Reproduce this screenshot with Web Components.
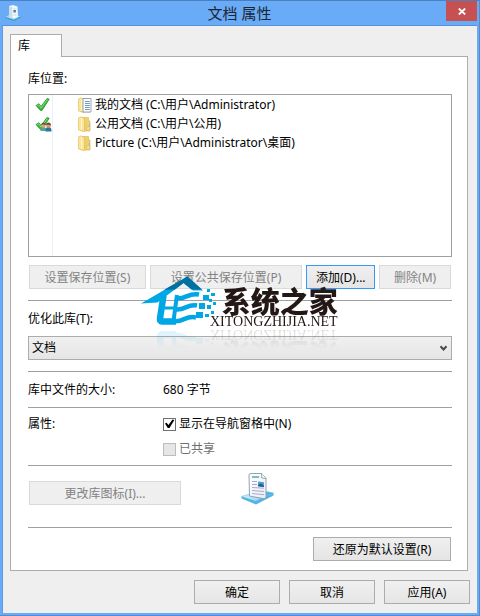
<!DOCTYPE html>
<html lang="zh-CN">
<head>
<meta charset="utf-8">
<title>文档 属性</title>
<style>
html, body { margin: 0; }
body { font: 12px/18px "Noto Sans", "Noto Sans CJK SC", sans-serif; color: #000; }
</style>
</head>
<body>
<library-dialog></library-dialog>

<script>
function define(name, html, setup) {
  const template = document.createElement('template');
  template.innerHTML = '<style>*{box-sizing:border-box}:host([hidden]){display:none}</style>' + html;
  customElements.define(name, class extends HTMLElement {
    connectedCallback() {
      if (this.shadowRoot) return;
      this.attachShadow({ mode: 'open' }).append(template.content.cloneNode(true));
      if (setup) setup(this, this.shadowRoot);
    }
  });
}

define('dialog-frame', `
<style>
:host { display: flex; flex-direction: column; box-sizing: border-box; min-height: 100vh; background: #6aabf7;
  border-top: 1px solid #4a80c0; border-right: 1px solid #4f8cd2; border-bottom: 1px solid #4f8cd2; }
.client { flex: 1; display: flex; flex-direction: column; margin: 0 2px 2px 2px; background: #efefef;
  border-top: 1px solid #5591d8; border-left: 1px solid #5e9ce6; padding: 8px 9px 9px 7px; }
</style>
<slot name="title"></slot>
<div class="client"><slot></slot></div>`);

define('title-bar', `
<style>
:host { display: grid; grid-template-columns: 31px 1fr 31px; height: 24px; padding: 0 2px; }
.icon { margin: 4px 0 0 3px; }
h1 { margin: 0; font-weight: 400; font-size: 15px; line-height: 24px; text-align: center; color: #1b2733; }
button { height: 20px; border: 0; padding: 0; background: #c75050; display: grid; place-items: center; }
svg { display: block; }
</style>
<svg class="icon" width="16" height="16" viewBox="0 0 16 16">
  <path d="M0 12l5-2.500 11 1.700-7 4.600z" fill="#8fd6f2"/>
  <path d="M0 12l9 2.800 7-3.600v1L9 16 0 13z" fill="#3c93c8"/>
  <path d="M4 1l4-1 4.500 1.500.5 10.500-4.500 1.500L4 12z" fill="#f3f8fa"/>
  <path d="M4 1l3.500 1.500v10.800L4 12z" fill="#cfdde5"/>
  <path d="M8.500 4h2.800M8.500 10h3" stroke="#c3d2da" stroke-width=".8"/>
  <path d="M8.500 5h2.300v2.500H8.500z" fill="#49768f"/>
</svg>
<h1><slot></slot></h1>
<button type="button" aria-label="关闭"><svg width="8" height="7" viewBox="0 0 8 7"><path d="M.8.500L7.200 6.500M7.200.500L.8 6.500" stroke="#fff" stroke-width="1.800"/></svg></button>`);

define('tab-panel', `
<style>
:host { display: flex; flex-direction: column; flex: 1; }
.tabs { display: flex; }
.tab { width: 52px; height: 23px; padding: 0 7px; margin-bottom: -1px; position: relative;
  border: 1px solid #acacac; border-bottom: 0; background: #fff; font: inherit; line-height: 20px; text-align: left; color: inherit; }
.page { flex: 1; display: flex; flex-direction: column; background: #fff; border: 1px solid #acacac; padding: 13px 15px 9px 17px; }
</style>
<div class="tabs" role="tablist"><button class="tab" role="tab" aria-selected="true" type="button"></button></div>
<div class="page" role="tabpanel"><slot></slot></div>`, (host, root) => {
  root.querySelector('.tab').textContent = host.getAttribute('label');
});

define('push-button', `
<style>
:host { display: block; }
button { display: block; width: 100%; height: 24px; padding: 1px 0 0; font: inherit; line-height: 21px; color: #000; white-space: nowrap;
  border: 1px solid #acacac; background: linear-gradient(#f0f0f0, #e5e5e5); }
:host([default]) button { border-color: #3399ff; }
button:disabled { color: #838383; border-color: #d9d9d9; background: #efefef; }
</style>
<button type="button"><slot></slot></button>`, (host, root) => {
  root.querySelector('button').disabled = host.hasAttribute('disabled');
});

define('rule-line', `
<style>:host { display: block; } hr { margin: 0; border: 0; height: 1px; background: #a0a0a0; }</style><hr>`);

define('location-list', `
<style>
:host { flex: 1; display: flex; border: 1px solid #a0a0a0; }
.list { flex: 1; padding-top: 1px; background: linear-gradient(90deg, #fff 23px, #e6f0fb 23px, #e6f0fb 24px, #fff 24px); }
</style>
<div class="list" role="list"><slot></slot></div>`);

define('location-item', `
<style>
:host { display: grid; grid-template-columns: 48px 18px 1fr; height: 19px; line-height: 18px; }
.marks { padding: 0 0 0 6px; }
.folder { margin-top: 1px; }
svg { display: block; }
</style>
<span class="marks"><svg width="18" height="17" viewBox="0 0 18 17">
  <g class="tick"><path d="M1 9.500l3-1.800 2 2.800L12 2.500l2.200.7L7 14.500H5.500z" fill="#35b83a" stroke="#168c22" stroke-width=".7"/><path d="M2.300 9.500l1.500-.7 2.200 3.300 6.500-8.600" fill="none" stroke="#8ce478" stroke-width=".9"/></g>
  <g class="people"><path d="M5.500 16c0-3 1-4 3-4s3 1 3 4z" fill="#4fa79b"/><path d="M10.500 16.500c0-3.500 1-4.500 3-4.500s3 1 3 4.500z" fill="#32739c"/><circle cx="8.500" cy="10.500" r="2.200" fill="#dca374"/><circle cx="13.500" cy="10.600" r="2.300" fill="#d69769"/><path d="M6.200 10c0-3 4.600-3 4.700 0L8 9.200zM11 10c0-3.300 5-3.300 5 .3L13 9.500z" fill="#6b4532"/></g>
</svg></span>
<svg class="folder" width="16" height="16" viewBox="0 0 16 16">
  <path d="M4 1.500h7.500v3.500h1.500v10H4z" fill="#f0cf6c" stroke="#dcb650" stroke-width=".6"/>
  <path d="M1.500 2L4 .8l3.500 1.700v13L1.500 14z" fill="#fae59b" stroke="#dcb850" stroke-width=".6"/>
  <path d="M4.500 2v12" stroke="#fff4c8"/>
  <path class="back" d="M9.500 10.500h3.300v4.200H9.500z" fill="#f7de8f" stroke="#dcb650" stroke-width=".6"/>
  <path class="back" d="M12.500 8v2.500" stroke="#7cc1e8"/>
  <g class="paper"><path d="M6 1.500h8v13.500H6z" fill="#f9fbfd" stroke="#8192a5" stroke-width=".8"/><path d="M8 4.500h4.800M8 6.500h4.800M8 8.500h4.800M8 10.500h4.800M8 12.500h4.800" stroke="#527fb1" stroke-width=".8"/></g>
</svg>
<span><slot></slot></span>`, (host, root) => {
  host.setAttribute('role', 'listitem');
  const has = n => host.hasAttribute(n);
  if (!has('current') && !has('shared')) root.querySelector('.tick').remove();
  if (!has('shared')) root.querySelector('.people').remove();
  if (!has('documents')) root.querySelector('.paper').remove();
});

define('check-box', `
<style>
:host { display: block; }
label { display: flex; align-items: center; gap: 3px; height: 18px; }
input { appearance: none; width: 13px; height: 13px; margin: 0; border: 1px solid #707070; background: #fff; display: grid; place-items: center; }
input:checked::before { content: ""; width: 11px; height: 11px; background: #000; clip-path: polygon(9% 45%, 23% 38%, 41% 58%, 77% 9%, 94% 14%, 50% 86%, 34% 86%); }
:host([disabled]) { color: #707070; }
input:disabled { border-color: #bcbcbc; background: #e6e6e6; }
</style>
<label><input type="checkbox"><span><slot></slot></span></label>`, (host, root) => {
  const input = root.querySelector('input');
  input.checked = host.hasAttribute('checked');
  input.disabled = host.hasAttribute('disabled');
});

define('select-field', `
<style>
:host { display: block; }
label { display: block; margin-bottom: 8px; }
.box { display: grid; align-items: center; }
select, svg { grid-area: 1 / 1; }
select { appearance: none; width: 100%; height: 24px; margin: 0; border: 1px solid #acacac; border-radius: 0; padding: 0 3px;
  font: inherit; line-height: 22px; color: #000; background: linear-gradient(#f0f0f0, #e5e5e5); }
svg { justify-self: end; margin-right: 5px; pointer-events: none; }
</style>
<label for="kind"></label>
<div class="box"><select id="kind"></select>
<svg width="7" height="7" viewBox="0 0 7 7"><path d="M.500 1.200l3 3.300 3-3.300" fill="none" stroke="#484848" stroke-width="2"/></svg></div>`, (host, root) => {
  root.querySelector('label').textContent = host.getAttribute('label');
  root.querySelector('select').append(new Option(host.getAttribute('value')));
});

define('property-row', `
<style>
:host { display: grid; grid-template-columns: 135px 1fr; }
.value { display: grid; gap: 7px; }
</style>
<span class="name"></span><div class="value"><slot></slot></div>`, (host, root) => {
  root.querySelector('.name').textContent = host.getAttribute('label');
});

define('library-icon', `
<style>:host { display: block; } svg { display: block; }</style>
<svg width="34" height="34" viewBox="0 0 34 34" role="img" aria-label="文档库">
  <defs><linearGradient id="base" x2="1"><stop stop-color="#d9f3fc"/><stop offset=".5" stop-color="#9bdcf6"/><stop offset="1" stop-color="#2d9bd9"/></linearGradient>
  <linearGradient id="sheet" x2="1" y2="1"><stop stop-color="#fff"/><stop offset="1" stop-color="#e8eef5"/></linearGradient></defs>
  <path d="M1.500 25.500l20-6L33.500 22 16 30.500z" fill="url(#base)" stroke="#7ec7e6" stroke-width=".7"/>
  <path d="M1.500 25.500l14 4.500 18-8v2.500L16 33.500 1.500 27.500z" fill="#54b5e4"/>
  <path d="M9.500 25L9 4q0-1.500 2-1.500h10.500L26 7v19q-.2 2-2 1.700z" fill="url(#sheet)" stroke="#8d99a4" stroke-width=".9"/>
  <path d="M21.500 2.500l.3 4.500 4.200.500" fill="#fff" stroke="#8d99a4" stroke-width=".9"/>
  <path d="M12 6h7" stroke="#54a6b8" stroke-width="1.500"/>
  <path d="M12 10.500h5M12 13.500h5M12 16.500l12 .7M12 19.500l12 1M12 22.500l12 1.200" stroke="#aba8cf" stroke-width="1"/>
  <path d="M18 10.500l6 .7v4.800l-6-.7z" fill="#45a1d8"/><path d="M18 14l3-1.500 3 2.500v1l-6-.7z" fill="#245e82"/>
</svg>`);

define('site-watermark', `
<style>
:host { position: absolute; left: 141px; top: 275px; display: flex; pointer-events: none; -webkit-box-reflect: below 2px linear-gradient(transparent 62%, rgba(0,0,0,.17)); color: #231815; }
svg { display: block; }
.words { margin: 12px 0 0 -8px; text-align: right; white-space: nowrap; }
.name { display: block; font-weight: 900; font-size: 29px; line-height: 30px; }
.site { display: block; font: 14px/10px "Liberation Serif", serif; }
</style>
<svg width="77" height="52" viewBox="0 0 77 52">
  <path d="M0 28.500L46.500 1.500 62 15.500H52L42.500 8 16.500 27.500z" fill="#00a7e5"/>
  <path d="M23 14.800L46.500 1.500 61 14.500H50.500L42.500 8 34 14.500z" fill="#00719f"/>
  <g fill="none" stroke="#00a7e5">
    <path d="M22.500 20.500l-3.500 23q-.3 3 2 3h14" stroke-width="6.500" stroke-linejoin="round"/>
    <path d="M36 20l-3.500 26" stroke-width="4"/>
    <path d="M22 33h12" stroke-width="3"/>
    <path d="M34 23c10 2.500 13-6 24-3.500M33 34c10 2.500 13-5.500 23-3.500M33 46c9 1.500 12-6 22-3.500" stroke-width="4.500"/>
  </g>
  <g fill="#00a7e5">
    <path d="M55 37h7v6h-7zM58 28h6v6h-6zM66 30h4v4h-4zM62 20h6v5h-6zM68 24h3v3h-3zM70 18h4v3h-4zM66 14h3v3h-3zM72 27h3v3h-3zM64 39h4v3h-4zM70 36h3v3h-3z"/>
  </g>
</svg>
<div class="words"><span class="name">系统之家</span><span class="site">XITONGZHIJIA.NET</span></div>`);

define('library-dialog', `
<style>
:host { display: block; position: relative; }
.heading { margin-bottom: 6px; }
.row { display: flex; gap: 4px; margin: 8px 1px 11px; }
.row push-button { flex: 1 1 0; }
.row .wide { flex-grow: 117; } .row .widest { flex-grow: 153; }
.row .narrow { flex-grow: 69; } .row .last { flex-grow: 72; }
select-field { margin: 9px 0 11px; }
.size { margin: 9px 0 8px; }
.flags { margin: 7px 0; }
.icons { display: grid; grid-template-columns: 152px 1fr; gap: 59px; align-items: end; margin: 5px 1px 22px; height: 34px; }
.reset { width: 138px; align-self: flex-end; margin: 9px 1px 0 0; }
.actions { display: flex; justify-content: flex-end; gap: 9px; padding-top: 9px; margin-right: -2px; }
.actions push-button { width: 86px; }
</style>
<dialog-frame>
  <title-bar slot="title">文档 属性</title-bar>
  <tab-panel label="库">
    <div class="heading">库位置:</div>
    <location-list>
      <location-item current documents>我的文档 (C:\\用户\\Administrator)</location-item>
      <location-item shared>公用文档 (C:\\用户\\公用)</location-item>
      <location-item>Picture (C:\\用户\\Administrator\\桌面)</location-item>
    </location-list>
    <div class="row">
      <push-button class="wide" disabled>设置保存位置(S)</push-button>
      <push-button class="widest" disabled>设置公共保存位置(P)</push-button>
      <push-button class="narrow" default>添加(D)...</push-button>
      <push-button class="last" disabled>删除(M)</push-button>
    </div>
    <rule-line></rule-line>
    <select-field label="优化此库(T):" value="文档"></select-field>
    <rule-line></rule-line>
    <property-row class="size" label="库中文件的大小:">680 字节</property-row>
    <rule-line></rule-line>
    <property-row class="flags" label="属性:">
      <check-box checked>显示在导航窗格中(N)</check-box>
      <check-box disabled>已共享</check-box>
    </property-row>
    <rule-line></rule-line>
    <div class="icons"><push-button disabled>更改库图标(I)...</push-button><library-icon></library-icon></div>
    <rule-line></rule-line>
    <push-button class="reset">还原为默认设置(R)</push-button>
  </tab-panel>
  <div class="actions"><push-button>确定</push-button><push-button>取消</push-button><push-button>应用(A)</push-button></div>
</dialog-frame>
<site-watermark></site-watermark>`);
</script>
</body>
</html>
